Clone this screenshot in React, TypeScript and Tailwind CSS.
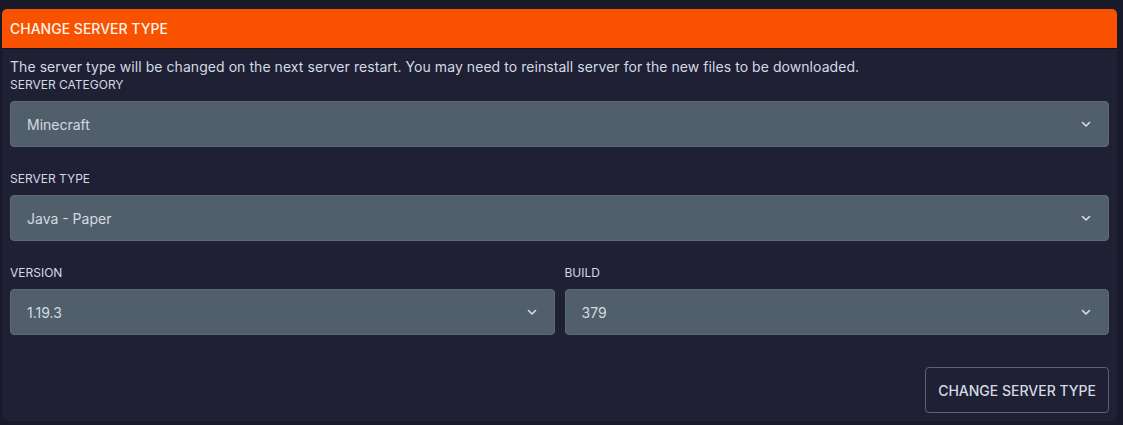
import React from "react";

function Chevron() {
  return (
    <svg width="12" height="12" viewBox="0 0 24 24" fill="none" stroke="#d6dde6" strokeWidth="3.2" strokeLinecap="round" strokeLinejoin="round">
      <path d="M5 9l7 7 7-7" />
    </svg>
  );
}

function Select({ value }: { value: string }) {
  return (
    <div className="h-[46px] w-full rounded-[4px] border border-[#5e6b77] bg-[#515f6b] flex items-center justify-between pl-[16px] pr-[16px]">
      <span className="text-[14px] text-[#d3dae3]">{value}</span>
      <Chevron />
    </div>
  );
}

function Label({ children }: { children: React.ReactNode }) {
  return <div className="text-[12px] leading-[16px] text-[#d3dae3] mb-[8px]">{children}</div>;
}

export default function App() {
  return (
    <div className="w-[1123px] h-[425px] bg-[#191a29] pt-[9px] pl-[2px]" style={{ fontFamily: "Inter, 'Noto Sans', sans-serif" }}>
      <div className="w-[1115px] h-[412px] rounded-[5px] bg-[#1f2034] overflow-hidden flex flex-col">
        <div className="h-[40px] bg-[#f85100] border-b border-[#151520] flex items-center pl-[8px]">
          <span className="text-[14px] font-medium text-[#fff3ea]">CHANGE SERVER TYPE</span>
        </div>
        <div className="px-[8px] flex flex-col">
          <p className="text-[14px] leading-[20px] tracking-[0.06px] text-[#d3dae3] mt-[8px]">
            The server type will be changed on the next server restart. You may need to reinstall server for the new files to be downloaded.
          </p>
          <Label>SERVER CATEGORY</Label>
          <Select value="Minecraft" />
          <div className="mt-[24px]">
            <Label>SERVER TYPE</Label>
            <Select value="Java - Paper" />
          </div>
          <div className="mt-[24px] grid grid-cols-2 gap-[10px]">
            <div>
              <Label>VERSION</Label>
              <Select value="1.19.3" />
            </div>
            <div>
              <Label>BUILD</Label>
              <Select value="379" />
            </div>
          </div>
          <div className="mt-[32px] flex justify-end">
            <button className="h-[46px] px-[12px] rounded-[4px] border border-[#5a6373] text-[14px] font-medium text-[#d3dae3]">
              CHANGE SERVER TYPE
            </button>
          </div>
        </div>
      </div>
    </div>
  );
}
